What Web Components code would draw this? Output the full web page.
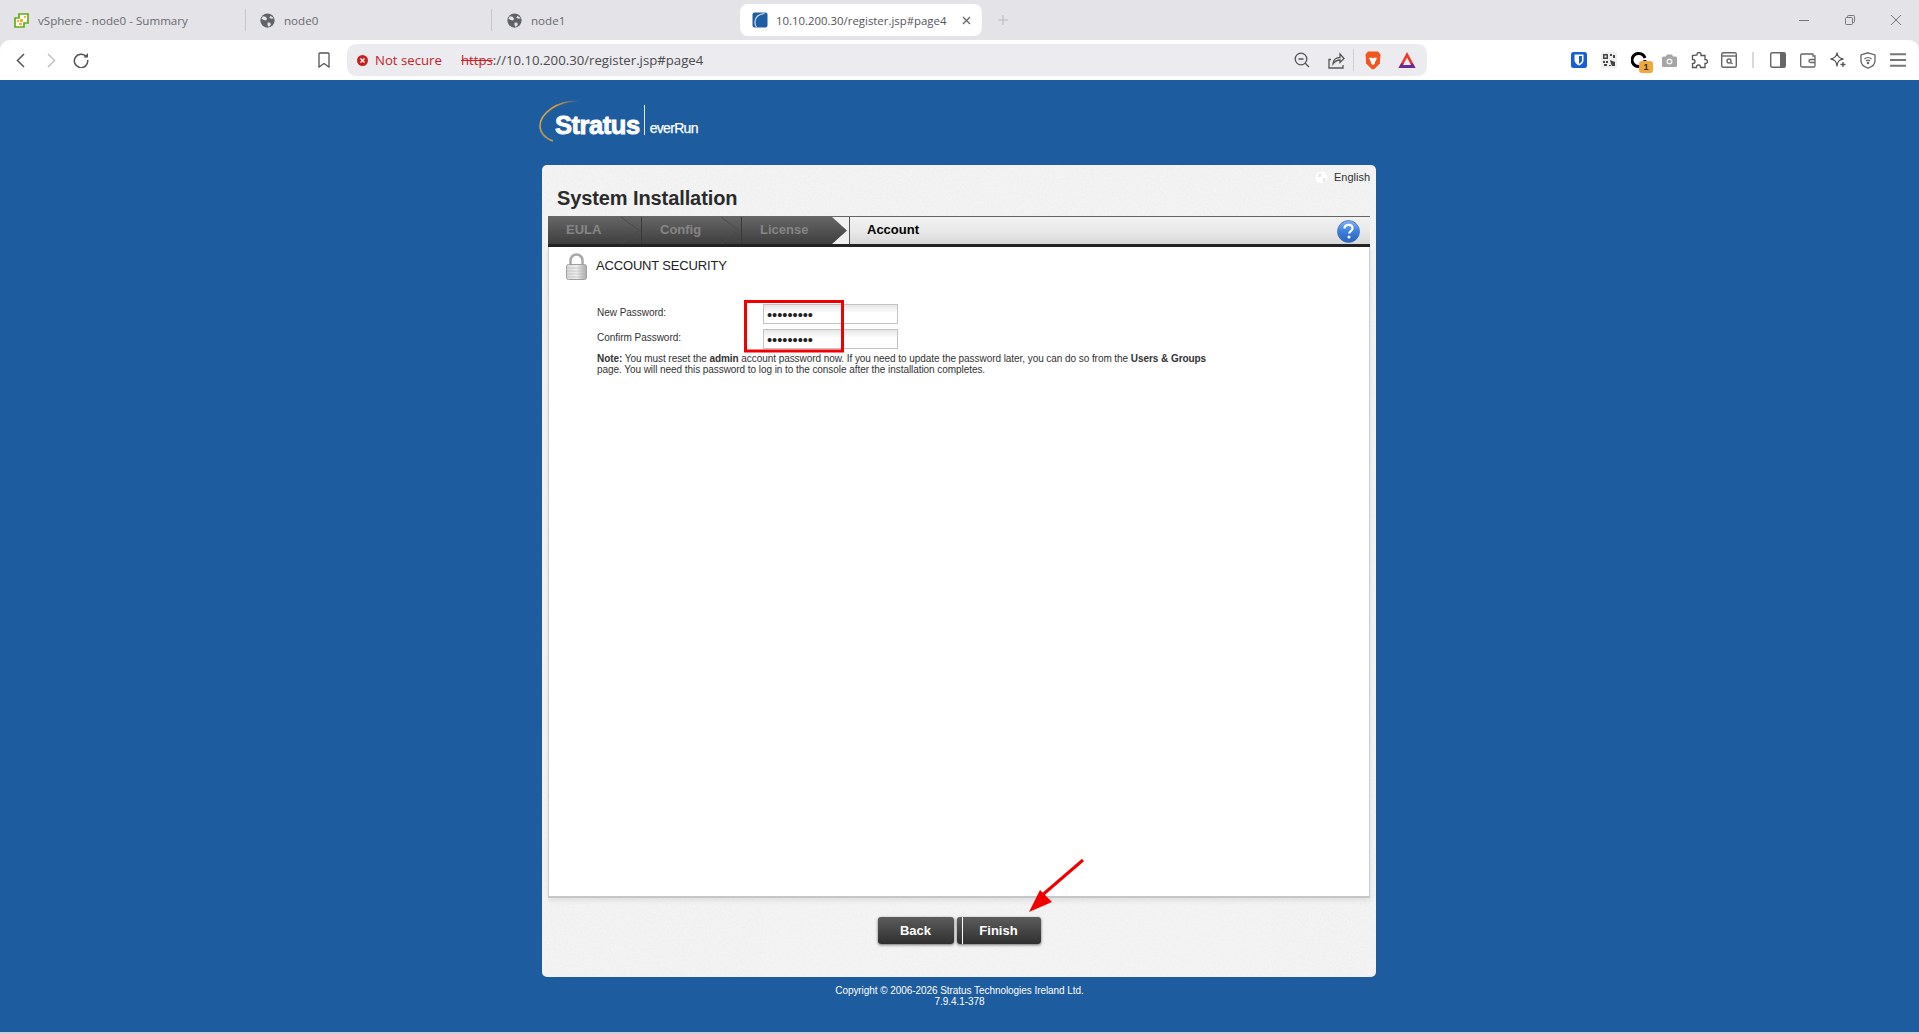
<!DOCTYPE html>
<html lang="en">
<head>
<meta charset="utf-8">
<title>10.10.200.30/register.jsp#page4</title>
<style>
html,body{margin:0;padding:0;height:100%;overflow:hidden;background:#1d5c9f;font-family:"Liberation Sans",Arial,sans-serif}
body{display:flex;flex-direction:column;height:1034px}
</style>
</head>
<body>
<browser-chrome></browser-chrome>
<install-page>
  <stratus-logo></stratus-logo>
  <install-card></install-card>
  <page-footer></page-footer>
  <review-marks></review-marks>
</install-page>
<script>
function el(name, css, html){
  const t=document.createElement('template');
  t.innerHTML='<style>'+css+'</style>'+html;
  customElements.define(name, class extends HTMLElement{
    constructor(){super();this.attachShadow({mode:'open'}).appendChild(t.content.cloneNode(true));}
  });
}
const GLOBE='<svg width="15" height="15" viewBox="0 0 16 16"><circle cx="8" cy="8" r="7.6" fill="#5f6368"/><path d="M3 3.5l3 .5 1.5 2-1 2-2.5-.5L1.500 6zM9 1.500l2 1.500-1 2 2 1 3-.5M8 10l3 .5.500 2L9.500 15 8 13z" fill="#e3e3e8"/></svg>';

el('browser-tab',`
:host{display:flex;align-items:center;box-sizing:border-box;width:246px;height:22px;padding-left:14px;gap:9px;border-right:1px solid #c6c6cb;font:11.6px "Open Sans",sans-serif;color:#6a6a6e;white-space:nowrap}
:host([active]){width:242px;height:32px;margin:4px 0 4px 0;align-self:flex-start;background:#fff;border:0;border-radius:8px;padding-left:12px;gap:8px;color:#55555a;font-size:11.4px}
::slotted(svg){flex:none}
`,'<slot name="icon"></slot><slot></slot>');

el('tool-icon',`
:host{display:flex;flex:none;align-items:center;justify-content:center;width:var(--w,16px);height:18px;position:relative}
svg{display:block}
`,'<slot></slot>');

el('browser-chrome',`
:host{display:block;flex:none;background:#e3e3e8}
.strip{display:flex;align-items:center;height:40px;position:relative}
.plus{margin-left:16px;color:#b7b7bb;display:flex}
.win{margin-left:auto;display:flex;align-items:center;gap:36px;padding-right:18px}
.bar{display:flex;align-items:center;height:40px;background:#fff;border-radius:10px 10px 0 0;padding-left:16px}
.addr{display:flex;align-items:center;width:1080px;height:32px;background:#ecebf0;border-radius:9px;margin-left:17px;font:13.2px "Open Sans",sans-serif;color:#444;box-sizing:border-box;padding-left:10px;flex:none}
.ns{color:#c5221f;margin-left:7px;width:86px;flex:none;white-space:nowrap}
.url{white-space:nowrap;color:#4a4a4f}
.url s{color:#c5221f;text-decoration-thickness:1px}
.addr-r{margin-left:auto;display:flex;align-items:center;padding-right:11px}
.sep{width:1px;height:22px;background:#cfcfd3;flex:none}
.ext{display:flex;align-items:center;margin-left:144px;gap:14px}
.badge{position:absolute;left:8px;top:10px;width:14px;height:12px;border-radius:3px;background:#f0a73c;font:bold 9px "Liberation Sans",sans-serif;color:#333;display:flex;align-items:center;justify-content:center}
`,`
<div class="strip">
  <browser-tab><svg slot="icon" width="15" height="15" viewBox="0 0 15 15"><path d="M5 1h9v9h-4v4H1V5h4z" fill="#fff" stroke="#5fae13" stroke-width="1.700"/><path d="M6 6h3v3H6z" fill="#f5b324"/><path d="M3 7h2v2H3zM10 3h2v2h-2z" fill="#f5b324"/><path d="M5 10h3v2H5z" fill="#f5b324"/></svg>vSphere - node0 - Summary</browser-tab>
  <browser-tab><span slot="icon" style="display:flex">${GLOBE}</span>node0</browser-tab>
  <browser-tab style="width:248px;border-right:0;padding-left:15px"><span slot="icon" style="display:flex">${GLOBE}</span>node1</browser-tab>
  <browser-tab active><svg slot="icon" width="16" height="16" viewBox="0 0 16 16"><rect x=".5" y=".5" width="15" height="15" rx="2" fill="#1f5ea3"/><path d="M12.500 1.500C7 2 3.500 5 3 9.500c-.2 2.500.5 4.500 1.500 5.500" fill="none" stroke="#cfe0f2" stroke-width="1.200"/></svg><span style="width:176px;display:inline-block">10.10.200.30/register.jsp#page4</span><svg width="9" height="9" viewBox="0 0 9 9" style="margin-left:2px"><path d="M1 1l7 7M8 1L1 8" stroke="#666" stroke-width="1.300"/></svg></browser-tab>
  <span class="plus"><svg width="10" height="10" viewBox="0 0 10 10"><path d="M5 0v10M0 5h10" stroke="#bcbcc0" stroke-width="1.200"/></svg></span>
  <span class="win">
    <svg width="10" height="10" viewBox="0 0 10 10"><path d="M0 5.500h10" stroke="#777" stroke-width="1"/></svg>
    <svg width="10" height="10" viewBox="0 0 10 10" fill="none" stroke="#777"><rect x=".5" y="2.500" width="7" height="7" rx="1"/><path d="M2.500 2.500V1.500a1 1 0 0 1 1-1h5a1 1 0 0 1 1 1v5a1 1 0 0 1-1 1h-1"/></svg>
    <svg width="10" height="10" viewBox="0 0 10 10"><path d="M0 0l10 10M10 0L0 10" stroke="#777" stroke-width="1"/></svg>
  </span>
</div>
<div class="bar">
  <tool-icon style="--w:9px"><svg width="9" height="15" viewBox="0 0 9 15"><path d="M8 1L1.500 7.500 8 14" fill="none" stroke="#555" stroke-width="1.500"/></svg></tool-icon>
  <tool-icon style="--w:9px;margin-left:22px"><svg width="9" height="15" viewBox="0 0 9 15"><path d="M1 1l6.500 6.500L1 14" fill="none" stroke="#c2c2c2" stroke-width="1.500"/></svg></tool-icon>
  <tool-icon style="margin-left:17px"><svg width="16" height="16" viewBox="0 0 16 16"><path d="M13.500 5A6.700 6.700 0 1 0 14.700 8" fill="none" stroke="#555" stroke-width="1.500"/><path d="M10.500 5.500h4.500V1z" fill="#555"/></svg></tool-icon>
  <tool-icon style="--w:12px;margin-left:229px"><svg width="12" height="16" viewBox="0 0 12 16"><path d="M1 2a1 1 0 0 1 1-1h8a1 1 0 0 1 1 1v13l-5-3.500L1 15z" fill="none" stroke="#555" stroke-width="1.300"/></svg></tool-icon>
  <div class="addr">
    <svg width="11" height="11" viewBox="0 0 11 11" style="flex:none"><circle cx="5.500" cy="5.500" r="5.500" fill="#c5221f"/><path d="M3.500 3.500l4 4M7.500 3.500l-4 4" stroke="#fff" stroke-width="1.400"/></svg>
    <span class="ns">Not secure</span>
    <span class="url"><s>https</s>://10.10.200.30/register.jsp#page4</span>
    <span class="addr-r">
      <svg width="16" height="16" viewBox="0 0 16 16" fill="none" stroke="#555" stroke-width="1.300"><circle cx="7" cy="7" r="5.800"/><path d="M4.500 7h5M11 11l4 4"/></svg>
      <svg style="margin-left:18px" width="17" height="17" viewBox="0 0 17 17" fill="none" stroke="#555" stroke-width="1.300"><path d="M3 7.500H1v8.500h14v-3"/><path d="M5 12c0-4 3-6.500 7-6.500V2l4 4.500-4 4V8c-3 0-5 1-7 4z" fill="none"/></svg>
      <span class="sep" style="margin-left:8px"></span>
      <svg style="margin-left:11px" width="16" height="19" viewBox="0 0 16 19"><path d="M3 .5h10l2.500 3-.6 9-5 5-1.900 1-1.900-1-5-5-.6-9z" fill="#f1561f"/><path d="M4 7l2.500-.5L8 7.500 9.500 6.500 12 7l-1.500 3-1 3L8 14l-1.500-1-1-3z" fill="#fff"/></svg>
      <svg style="margin-left:17px" width="18" height="18" viewBox="0 0 18 18"><path d="M9 1L17.500 17H.5z" fill="#f0352b"/><path d="M.5 17H17.500L15 12.500H3z" fill="#6b2a90"/><path d="M9 6.500L13 14H5z" fill="#ecebf0"/></svg>
    </span>
  </div>
  <span class="ext">
    <tool-icon><svg width="16" height="16" viewBox="0 0 16 16"><rect width="16" height="16" rx="2.500" fill="#175ddc"/><path d="M3.500 2.500h9v6c0 2.500-2.500 4-4.500 5-2-1-4.500-2.500-4.500-5z" fill="#fff"/><path d="M8 4v7.800c1.500-.8 3-2 3-3.600V4z" fill="#175ddc"/></svg></tool-icon>
    <tool-icon><svg width="16" height="16" viewBox="0 0 16 16"><rect width="16" height="16" fill="#efefef"/><g fill="#444"><path d="M2 2h5v5H2zM3.500 3.500v2h2v-2z" fill-rule="evenodd"/><path d="M9 2h2v2H9zM12 3h2v3h-2zM2 9h2v2H2zM5 9h2v2H5zM3 12h3v2H3zM8 13h2v1H8zM9 8l5 2v4h-3l-1-2z"/></g></svg></tool-icon>
    <tool-icon><svg width="16" height="16" viewBox="0 0 16 16"><path d="M8 1.500A6.500 6.500 0 1 0 14 8" fill="none" stroke="#000" stroke-width="3"/><path d="M8 1.500a6.500 6.500 0 0 1 6 4.500" fill="none" stroke="#000" stroke-width="3"/></svg><span class="badge">1</span></tool-icon>
    <tool-icon><svg width="15" height="13" viewBox="0 0 15 13"><path d="M1.500 2.500H4L5 .5h5l1 2h2.500a1.500 1.500 0 0 1 1.500 1.500v7.500a1.500 1.500 0 0 1-1.500 1.500h-12A1.500 1.500 0 0 1 0 11.500V4a1.500 1.500 0 0 1 1.500-1.500z" fill="#a5a5a5"/><circle cx="7.500" cy="7.500" r="3" fill="#efefef"/><circle cx="7.500" cy="7.500" r="1.600" fill="#a5a5a5"/></svg></tool-icon>
    <tool-icon style="--w:17px;margin-right:-1px"><svg width="17" height="17" viewBox="0 0 17 17"><path d="M6 3V2.500a2 2 0 0 1 4 0V3.500h4v4h.5a2 2 0 0 1 0 4H14V15.500H9.500V15a2 2 0 0 0-4 0v.5H1.500V11.500H2a2 2 0 0 0 0-4h-.5v-4z" fill="none" stroke="#555" stroke-width="1.300"/></svg></tool-icon>
    <tool-icon><svg width="16" height="16" viewBox="0 0 16 16" fill="none" stroke="#666" stroke-width="1.400"><rect x=".7" y=".7" width="14.600" height="14.600" rx="1.500"/><path d="M1 4h14"/><circle cx="8" cy="9" r="2"/><path d="M9.500 10.500l2 1.500"/></svg></tool-icon>
    <span class="sep" style="height:16px;margin:0 1px 0 1px;background:#d8d8d8;width:2px"></span>
    <tool-icon style="margin-left:1px"><svg width="16" height="16" viewBox="0 0 16 16"><rect x=".7" y=".7" width="14.600" height="14.600" rx="1.500" fill="none" stroke="#666" stroke-width="1.400"/><path d="M10 .7h4.500a.8.8 0 0 1 .8.8v13a.8.8 0 0 1-.8.8H10z" fill="#666"/></svg></tool-icon>
    <tool-icon><svg width="16" height="15" viewBox="0 0 16 15" fill="none" stroke="#666" stroke-width="1.300"><path d="M13 3V1H2a1.300 1.300 0 0 0-1.300 1.300v10.400A1.300 1.300 0 0 0 2 14h11.700a1.300 1.300 0 0 0 1.300-1.300V3z"/><path d="M15 6.500H10.500a1.500 1.500 0 0 0 0 3H15"/></svg></tool-icon>
    <tool-icon><svg width="16" height="16" viewBox="0 0 16 16"><path d="M7 1c.5 3.500 2 5 6 6-4 1-5.500 2.500-6 7-.5-4.500-2-6-6-7 4-1 5.500-2.500 6-6z" fill="none" stroke="#555" stroke-width="1.300" stroke-linejoin="round"/><path d="M13 10v5M10.500 12.500h5" stroke="#555" stroke-width="1.300"/></svg></tool-icon>
    <tool-icon><svg width="16" height="17" viewBox="0 0 16 17" fill="none" stroke="#666" stroke-width="1.300"><path d="M8 .8l7 2.200v6c0 3.500-3.500 6-7 7.200C4.500 15 1 12.500 1 9V3z"/><path d="M4.500 7a5 5 0 0 1 7 0M6 9a3 3 0 0 1 4 0"/><circle cx="8" cy="11" r=".6" fill="#666"/></svg></tool-icon>
    <tool-icon><svg width="16" height="14" viewBox="0 0 16 14"><path d="M0 1.200h16M0 7h16M0 12.800h16" stroke="#777" stroke-width="2"/></svg></tool-icon>
  </span>
</div>`);

el('install-page',`
:host{display:flex;flex:none;flex-direction:column;align-items:center;position:relative;height:952px;background:#1d5c9f;border-bottom:2px solid #cfcfd3}
`,'<slot></slot>');

el('stratus-logo',`
:host{display:flex;flex:none;align-items:flex-start;box-sizing:border-box;width:834px;height:85px;padding-top:20px;color:#fff;margin-right:1px}
svg{flex:none;margin:0 -26px 0 -3px}
.s{font:bold 25.5px/1 "Liberation Sans",sans-serif;letter-spacing:-.45px;-webkit-text-stroke:.9px #fff;margin-top:13px;padding-right:4px}
.l{width:1px;height:30px;background:#dfe8f2;margin-top:5px;margin-right:5px}
.e{font:14px/1 "Liberation Sans",sans-serif;letter-spacing:-.7px;-webkit-text-stroke:.25px #fff;margin-top:21px}
`,`<svg width="42" height="42" viewBox="0 0 42 42"><defs><linearGradient id="g" x1="1" y1="0" x2="0" y2="1"><stop offset="0" stop-color="#1d5c9f"/><stop offset=".35" stop-color="#e0a030"/><stop offset=".8" stop-color="#d9a441"/><stop offset="1" stop-color="#6f7f7a"/></linearGradient></defs><path d="M40 1C18 0 1 14 1 26c0 7 5 12 13 15" fill="none" stroke="url(#g)" stroke-width="1.600"/></svg><span class="s">Stratus</span><span class="l"></span><span class="e">everRun</span>`);

el('step-bar',`
:host{display:flex;flex:none;height:31px;box-sizing:border-box;border-top:1px solid #666;border-bottom:3px solid #232323;font:bold 13px "Liberation Sans",sans-serif}
.steps{display:flex;flex:none}
.st{position:relative;box-sizing:border-box;display:flex;align-items:center;height:27px;padding-bottom:2px;background:linear-gradient(#666,#3e3e3e);color:#858585}
.st svg{position:absolute;right:0;top:0}
.cur{flex:1;display:flex;align-items:center;justify-content:space-between;border-left:1px solid #555;padding:0 10px 0 17px;background:linear-gradient(#f2f2f2,#e8e8e8 55%,#d8d8d8);color:#000}
.cur span{padding-bottom:2px}
`,`<div class="steps">
 <div class="st" style="width:94px;padding-left:18px">EULA<svg width="22" height="27" viewBox="0 0 22 27"><path d="M1 0l18 13.500L1 27" fill="none" stroke="#4a4a4a"/><path d="M21.500 0v27" stroke="#383838"/></svg></div>
 <div class="st" style="width:100px;padding-left:18px">Config<svg width="22" height="27" viewBox="0 0 22 27"><path d="M1 0l18 13.500L1 27" fill="none" stroke="#4a4a4a"/><path d="M21.500 0v27" stroke="#383838"/></svg></div>
 <div class="st" style="width:107px;padding-left:18px">License<svg width="17" height="27" viewBox="0 0 17 27"><path d="M0 0H17V27H0L15 13.500z" fill="#f0f0f0"/></svg></div>
</div>
<div class="cur"><span><slot></slot></span><svg width="23" height="23" viewBox="0 0 23 23" style="flex:none;margin-top:1px"><defs><linearGradient id="h" x1="0" y1="0" x2="0" y2="1"><stop offset="0" stop-color="#86b3ee"/><stop offset=".5" stop-color="#3d7fdc"/><stop offset="1" stop-color="#2d61b8"/></linearGradient></defs><circle cx="11.500" cy="11.500" r="11" fill="url(#h)" stroke="#3a6cb8" stroke-width=".7"/><path d="M7.500 8.500c0-2.500 2-3.700 4-3.700 2.300 0 4 1.300 4 3.400 0 2.800-3.300 2.800-3.300 5.300" fill="none" stroke="#fff" stroke-width="2.200"/><circle cx="12" cy="17" r="1.500" fill="#fff"/></svg></div>`);

el('pw-field',`
:host{display:contents}
label{font:10px/11px "Liberation Sans",sans-serif;color:#333;padding-top:3px;letter-spacing:-.03px}
input{box-sizing:border-box;width:135px;height:20px;padding:1px 3px 0;margin:0;border:1px solid #c3c3c3;background:linear-gradient(#e6e6e6,#fff 45%);font:14.600px "Liberation Sans",sans-serif;color:#222;outline:0;border-radius:0}
`,'<label><slot></slot></label><input type="password" value="Password1" aria-label="password">');

el('dark-button',`
:host{display:flex;align-items:center;justify-content:center;position:relative;box-sizing:border-box;height:27px;width:var(--w);border-radius:3px;background:linear-gradient(#5c5c5c,#2f2f2f);box-shadow:0 1px 3px rgba(0,0,0,.55);font:bold 13px "Liberation Sans",sans-serif;color:#fff}
:host([ruled]){background:linear-gradient(90deg,transparent 5px,#fff 5px,#fff 6px,transparent 6px),linear-gradient(#5c5c5c,#2f2f2f)}
`,'<slot></slot>');

el('install-card',`
:host{display:flex;flex:none;flex-direction:column;position:relative;overflow:hidden;box-sizing:border-box;width:834px;height:812px;margin-right:1px;padding:0 6px;background:#f4f4f4;border-radius:5px;color:#333}
.noise{position:absolute;left:0;top:0;width:100%;height:100%}
.lang,h1,step-bar,.body,.foot{position:relative}
.lang{height:19px;flex:none;display:flex;justify-content:flex-end;align-items:flex-end;gap:6px;font:11px/13px "Liberation Sans",sans-serif}
h1{margin:0;height:32px;flex:none;padding:1px 0 0 9px;box-sizing:border-box;font:bold 20px/26px "Liberation Sans",sans-serif;letter-spacing:-.1px;color:#2b2b2b}
.body{flex:1;background:#fff;border:1px solid #ccc;border-bottom:2px solid #c6c6c6;border-top:0;box-shadow:0 3px 5px rgba(0,0,0,.08);min-height:0;box-sizing:border-box}
.head{display:flex;align-items:flex-start;padding:6px 0 0 17px;height:50px;box-sizing:border-box;gap:9px;font:13px/16px "Liberation Sans",sans-serif;color:#222}
.head span{margin-top:5px;letter-spacing:-.17px}
.grid{display:grid;grid-template-columns:166px 135px;row-gap:5px;padding-left:48px;margin-top:7px}
.note{margin:4px 0 0 48px;width:614px;font:10px/11px "Liberation Sans",sans-serif;letter-spacing:-.06px;color:#333}
.foot{height:79px;flex:none;display:flex;justify-content:center;gap:3px;padding-top:19px;box-sizing:border-box}
`,`
<svg class="noise" aria-hidden="true"><filter id="n"><feTurbulence type="fractalNoise" baseFrequency=".55" numOctaves="2" seed="4"/><feColorMatrix values="0 0 0 0 .6  0 0 0 0 .6  0 0 0 0 .6  .35 .35 0 0 -.25"/></filter><rect width="100%" height="100%" filter="url(#n)" opacity=".35"/></svg>
<div class="lang"><svg width="13" height="13" viewBox="0 0 13 13"><circle cx="6.500" cy="6.500" r="6" fill="#fff"/><path d="M4 2l3 1-1 3-3 0zM8 7l3 0-1 4-2 0z" fill="#e8e8e8"/></svg><span>English</span></div>
<h1>System Installation</h1>
<step-bar>Account</step-bar>
<div class="body">
  <div class="head">
    <svg width="21" height="27" viewBox="0 0 21 27" style="flex:none"><defs><linearGradient id="lb" x1="0" y1="0" x2="1" y2="0"><stop offset="0" stop-color="#d8d8d8"/><stop offset=".5" stop-color="#f0f0f0"/><stop offset="1" stop-color="#a8a8a8"/></linearGradient></defs><path d="M4.500 12V7.500a6 6 0 0 1 12 0V12" fill="none" stroke="#a8a8a8" stroke-width="2.500"/><rect x=".5" y="11.500" width="20" height="15" rx="2" fill="url(#lb)" stroke="#a0a0a0"/><path d="M1 15h19M1 18h19M1 21h19M1 24h19" stroke="#b8b8b8" stroke-width=".7"/></svg>
    <span>ACCOUNT SECURITY</span>
  </div>
  <div class="grid">
    <pw-field>New Password:</pw-field>
    <pw-field>Confirm Password:</pw-field>
  </div>
  <div class="note"><b>Note:</b> You must reset the <b>admin</b> account password now. If you need to update the password later, you can do so from the <b>Users &amp; Groups</b> page. You will need this password to log in to the console after the installation completes.</div>
</div>
<div class="foot"><dark-button style="--w:76px">Back</dark-button><dark-button ruled style="--w:84px">Finish</dark-button></div>`);

el('page-footer',`
:host{display:block;flex:none;margin-top:8px;text-align:center;color:#fff;font:10px/11px "Liberation Sans",sans-serif;letter-spacing:-.06px}
`,'<div>Copyright © 2006-2026 Stratus Technologies Ireland Ltd.</div><div>7.9.4.1-378</div>');

el('review-marks',`
:host{display:block;position:absolute;left:0;top:0;width:100%;height:100%;pointer-events:none}
svg{display:block}
`,`<svg width="1919" height="952" viewBox="0 80 1919 952"><rect x="745.500" y="301.500" width="97" height="49.500" fill="none" stroke="#f00000" stroke-width="3"/><path d="M1083 860L1040 897" stroke="#f00000" stroke-width="3"/><path d="M1029 912l11-22 12 12z" fill="#f00000"/></svg>`);
</script>
</body>
</html>
